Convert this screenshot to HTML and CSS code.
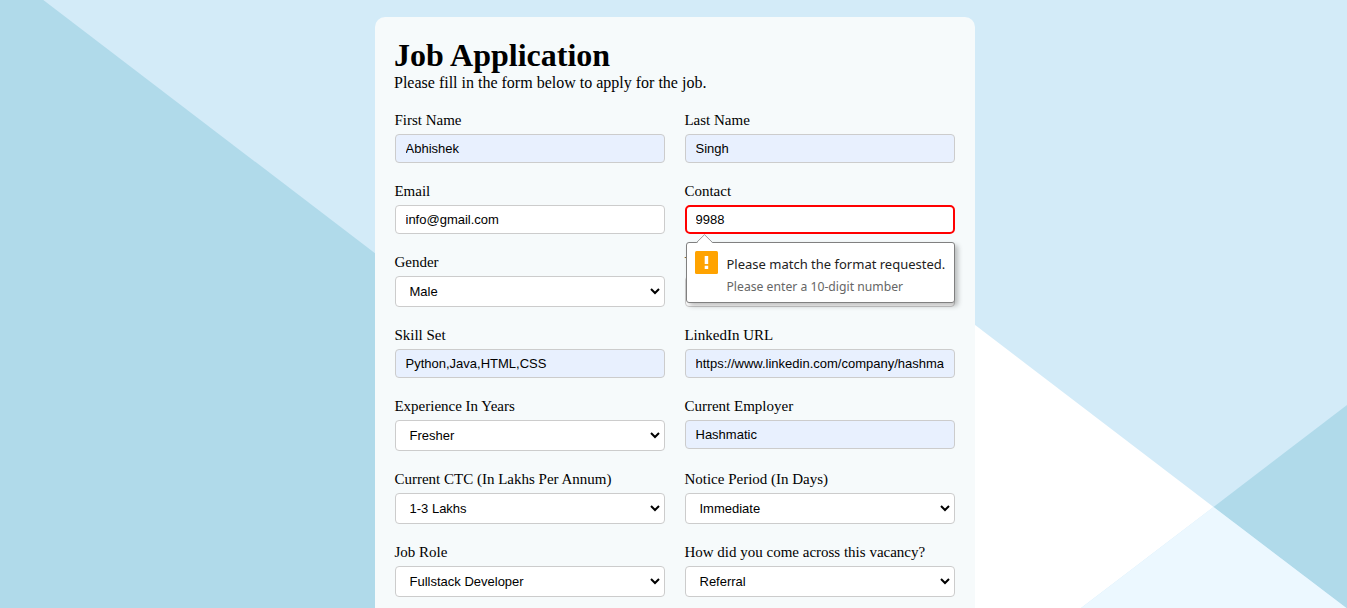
FILE: index.html
```html
<!DOCTYPE html>
<html lang="en">
<head>
<meta charset="utf-8">
<title>Job Application</title>
<link rel="stylesheet" href="styles.css">
</head>
<body>
<svg class="backdrop" viewBox="0 0 1347 608" aria-hidden="true">
  <rect width="1347" height="608" fill="#d3ebf8"/>
  <path d="M600 38.6L1213.5 507L1081 608H600Z" fill="#fff"/>
  <path d="M0 0H43.3L600 425V608H0Z" fill="#b0daea"/>
  <path d="M1347 405V608.5L1213.5 507Z" fill="#b0daea"/>
  <path d="M1213.5 507L1347 608.5H1080.5Z" fill="#ecf8ff"/>
</svg>
<main class="card">
  <h1 class="title">Job Application</h1>
  <p class="intro">Please fill in the form below to apply for the job.</p>
  <form class="grid">
    <div class="field"><label class="label" for="first">First Name</label><input class="control filled" id="first" value="Abhishek"></div>
    <div class="field"><label class="label" for="last">Last Name</label><input class="control filled" id="last" value="Singh"></div>
    <div class="field"><label class="label" for="email">Email</label><input class="control" id="email" value="info@gmail.com"></div>
    <div class="field">
      <label class="label" for="contact">Contact</label><input class="control invalid" id="contact" value="9988">
      <div class="bubble" role="alert">
        <svg class="tip" width="20" height="10" viewBox="0 0 20 10"><path d="M1.5 9.5L9.5 1L18 9.5V10H1.5Z" fill="#fff"/><path d="M1.5 8.5L9.5 .7L17.5 8.5" fill="none" stroke="#999"/></svg>
        <svg class="warn" width="23" height="23" viewBox="0 0 23 23"><rect width="23" height="23" rx="1.5" fill="#ffa300"/><path d="M9.7 5h3.5v8H9.7zM9.7 14.7h3.5v3.3H9.7z" fill="#fff"/></svg>
        <div class="bubble-text">
          <span class="message">Please match the format requested.</span>
          <span class="hint">Please enter a 10-digit number</span>
        </div>
      </div>
    </div>
    <div class="field"><label class="label" for="gender">Gender</label><select class="control select" id="gender"><option>Male</option></select></div>
    <div class="field"><label class="label" for="year">Y</label><select class="control select" id="year"><option></option></select></div>
    <div class="field"><label class="label" for="skills">Skill Set</label><input class="control filled" id="skills" value="Python,Java,HTML,CSS"></div>
    <div class="field"><label class="label" for="linkedin">LinkedIn URL</label><input class="control filled" id="linkedin" value="https://www.linkedin.com/company/hashmatic"></div>
    <div class="field"><label class="label" for="exp">Experience In Years</label><select class="control select" id="exp"><option>Fresher</option></select></div>
    <div class="field"><label class="label" for="employer">Current Employer</label><input class="control filled" id="employer" value="Hashmatic"></div>
    <div class="field"><label class="label" for="ctc">Current CTC (In Lakhs Per Annum)</label><select class="control select" id="ctc"><option>1-3 Lakhs</option></select></div>
    <div class="field"><label class="label" for="notice">Notice Period (In Days)</label><select class="control select" id="notice"><option>Immediate</option></select></div>
    <div class="field"><label class="label" for="role">Job Role</label><select class="control select" id="role"><option>Fullstack Developer</option></select></div>
    <div class="field"><label class="label" for="source">How did you come across this vacancy?</label><select class="control select" id="source"><option>Referral</option></select></div>
  </form>
</main>
</body>
</html>
```
FILE: styles.css
```css
* { box-sizing: border-box; margin: 0; padding: 0; }
body {
  height: 608px;
  overflow: hidden;
  padding-top: 17px;
  font-family: "Liberation Serif", "Times New Roman", serif;
  color: #000;
}
.backdrop { position: fixed; inset: 0; width: 1347px; height: 608px; z-index: -1; }
.card {
  width: 600px;
  height: 591px;
  margin: 0 auto 0 375px;
  padding: 20px 20px 0;
  border-radius: 10px 10px 0 0;
  background: #f6fafb;
}
.title { margin-left: -1px; font-size: 32px; line-height: 37px; }
.intro { margin-left: -1px; font-size: 16px; line-height: 18px; margin-bottom: 20px; }
.grid { display: grid; grid-template-columns: 270px 270px; gap: 20px; }
.field { position: relative; }
.label { display: block; margin-left: -.6px; font-size: 15px; line-height: 17px; margin-bottom: 5px; }
.control {
  display: block;
  width: 100%;
  height: 29px;
  padding: 0 10px 0 9.5px;
  border: 1px solid #ccc;
  border-radius: 4px;
  background: #fff;
  color: #000;
  font-family: "Liberation Sans", Arial, sans-serif;
  font-size: 13px;
  outline: none;
}
.filled { background: #e8f0fe; }
.invalid { border: 2px solid #f00; border-radius: 5px; padding: 0 9px 0 8.5px; }
.select {
  height: 31px;
  padding: 0 20px 1px 13.5px;
  appearance: none;
  background: #fff url("data:image/svg+xml,%3Csvg xmlns='http://www.w3.org/2000/svg' width='10' height='7'%3E%3Cpath d='M1 1L5 5L9 1' fill='none' stroke='%23000' stroke-width='2'/%3E%3C/svg%3E") no-repeat right 4px top 11px;
}
.bubble {
  position: absolute;
  z-index: 2;
  left: 1px;
  top: 59px;
  width: 269px;
  height: 61px;
  display: flex;
  gap: 9px;
  padding: 8px;
  border: 1px solid #808080;
  border-radius: 3px;
  background: #fff;
  box-shadow: 3px 3px 5px rgba(0, 0, 0, .25);
}
.tip { position: absolute; left: 8px; top: -9px; }
.warn { flex: none; }
.bubble-text { display: flex; flex-direction: column; padding-top: 2px; margin-left: -.5px; white-space: nowrap; font-family: "Noto Sans", sans-serif; }
.message { font-size: 13px; line-height: 22px; color: #222; }
.hint { font-size: 12.2px; line-height: 23px; color: #666; }
```
